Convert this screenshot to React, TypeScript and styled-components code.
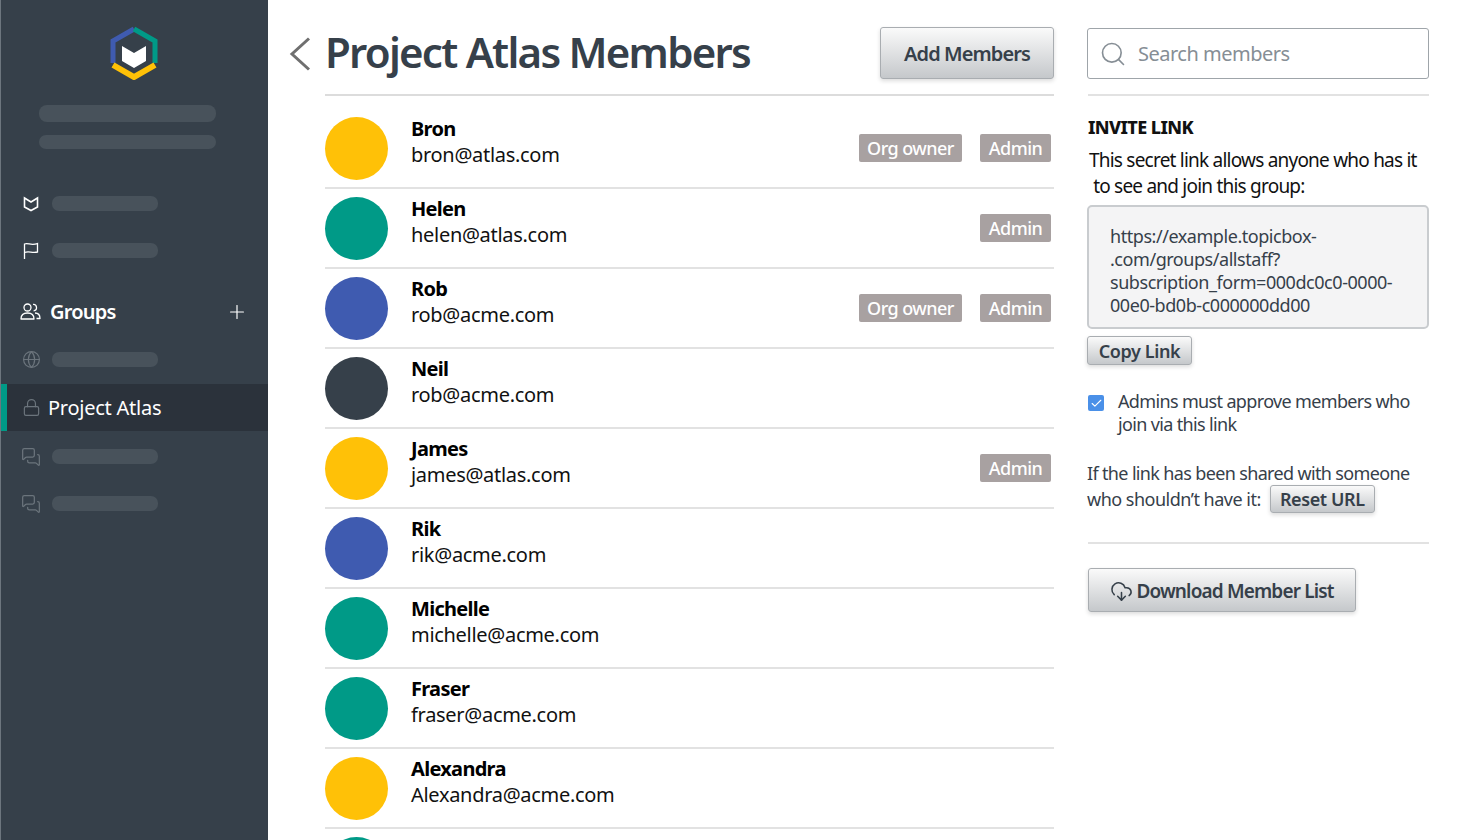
import React from "react";
import styled, { createGlobalStyle } from "styled-components";
import { Check, CloudDownload, Globe, Lock, MessagesSquare, Plus, Search } from "lucide-react";

const GlobalStyle = createGlobalStyle`
  html, body {
    margin: 0;
    height: 100%;
    overflow: hidden;
    background: #fff;
  }
  body {
    font-family: "Noto Sans", "Open Sans", sans-serif;
    color: #36404a;
  }
`;

const Page = styled.div`
  display: grid;
  grid-template-columns: 268px 1fr;
  height: 840px;
  overflow: hidden;
`;

const Sidebar = styled.nav`
  display: flex;
  flex-direction: column;
  background: #36404a;
  border-left: 1px solid #6d767e;
  box-sizing: border-box;
`;

const LogoWrap = styled.div`
  display: flex;
  justify-content: center;
  padding: 26px 2px 0 0;
  height: 79px;
`;

const OrgBlock = styled.div`
  display: flex;
  flex-direction: column;
  gap: 13px;
  padding: 0 52px 0 38px;
  margin-bottom: 31px;
`;

const Skeleton = styled.div<{ $h: number }>`
  height: ${p => p.$h}px;
  border-radius: 8px;
  background: #48525b;
`;

const NavRow = styled.div<{ $top?: number }>`
  display: flex;
  align-items: center;
  height: 47px;
  margin-top: ${p => p.$top ?? 0}px;
  padding-left: 20px;
  gap: 11px;
`;

const NavIcon = styled.span<{ $dim?: boolean }>`
  display: flex;
  width: 20px;
  justify-content: center;
  color: ${p => (p.$dim ? "#6b747c" : "#fff")};
`;

const NavBar = styled.div`
  width: 106px;
  height: 15px;
  border-radius: 7px;
  background: #48525b;
`;

const GroupsRow = styled.div`
  display: flex;
  align-items: center;
  height: 47px;
  padding: 0 20px 0 19px;
  margin-top: 14px;
  gap: 9px;
  color: #fff;
  font-size: 20px;
  font-weight: 600;
  letter-spacing: -0.8px;
`;

const GroupsLabel = styled.span`
  flex: 1;
`;

const ActiveRow = styled.div`
  display: flex;
  align-items: center;
  height: 47px;
  margin-top: 1px;
  background: #2b323b;
  border-left: 6px solid #009a87;
  padding-left: 14px;
  gap: 7px;
  color: #fff;
  font-size: 20px;
  letter-spacing: -0.25px;
`;

const Content = styled.main`
  display: flex;
  padding: 27px 32px 0 21px;
  gap: 33px;
  min-width: 0;
`;

const MembersColumn = styled.section`
  width: 765px;
  flex: none;
`;

const HeaderRow = styled.header`
  display: flex;
  align-items: flex-start;
  height: 67px;
`;

const BackIcon = styled.span`
  display: flex;
  width: 36px;
  padding-top: 10px;
`;

const Title = styled.h1`
  flex: 1;
  margin: -1px 0 0;
  font-size: 42px;
  font-weight: 600;
  line-height: 52px;
  letter-spacing: -1.75px;
  color: #36404a;
`;

const RaisedButton = styled.button<{ $size: "lg" | "sm" }>`
  display: inline-flex;
  align-items: center;
  justify-content: center;
  font-family: inherit;
  font-weight: 600;
  color: #36404a;
  background: linear-gradient(#fafafa, #c5c8cb);
  border: 1px solid #a9adb1;
  border-radius: 3px;
  box-shadow: 0 2px 4px rgba(0, 0, 0, 0.14);
  padding: 0;
  ${p =>
    p.$size === "lg"
      ? "font-size: 20px; letter-spacing: -0.9px;"
      : "font-size: 18px; letter-spacing: -0.4px;"}
`;

const AddButton = styled(RaisedButton)`
  width: 174px;
  height: 52px;
  padding-top: 1px;
`;

const List = styled.div`
  margin-left: 36px;
  border-top: 2px solid #dcdcdc;
  padding-top: 13px;
`;

const Row = styled.div`
  display: grid;
  grid-template-columns: 63px 1fr auto;
  column-gap: 23px;
  align-items: center;
  height: 80px;
  box-sizing: border-box;
  padding-top: 1px;
  border-bottom: 2px solid #e2e2e2;
`;

const Avatar = styled.div<{ $color: string }>`
  width: 63px;
  height: 63px;
  border-radius: 50%;
  background: ${p => p.$color};
`;

const Person = styled.div`
  padding-bottom: 13px;
  font-size: 20px;
  line-height: 26px;
  letter-spacing: -0.3px;
  color: #111;
`;

const PersonName = styled.div`
  font-weight: 700;
  letter-spacing: -0.7px;
  color: #000;
`;

const Badges = styled.div`
  display: flex;
  gap: 18px;
  padding: 0 3px 1px 0;
`;

const Badge = styled.span<{ $w: number }>`
  display: flex;
  align-items: center;
  justify-content: center;
  width: ${p => p.$w}px;
  height: 28px;
  border-radius: 2px;
  background: #a8a1a1;
  color: #fff;
  font-size: 18px;
  font-weight: 500;
  letter-spacing: -0.55px;
`;

const SideColumn = styled.aside`
  width: 342px;
  flex: none;
  font-size: 18px;
`;

const SearchBox = styled.div`
  display: flex;
  align-items: center;
  gap: 11px;
  box-sizing: border-box;
  height: 51px;
  margin-top: 1px;
  padding-left: 11px;
  border: 1px solid #9fa5aa;
  border-radius: 3px;
  color: #868e95;
  font-size: 20px;
  letter-spacing: -0.5px;
`;

const Rule = styled.hr`
  margin: 15px 0 0 1px;
  border: 0;
  border-top: 2px solid #e2e2e2;
`;

const SectionTitle = styled.h2`
  margin: 19px 0 0 1px;
  font-size: 18px;
  line-height: 24px;
  font-weight: 800;
  letter-spacing: -0.6px;
  color: #111;
`;

const Intro = styled.p`
  margin: 8px 0 0 2px;
  font-size: 19px;
  line-height: 26px;
  letter-spacing: -0.78px;
  color: #111;
  white-space: pre;
`;

const LinkBox = styled.div`
  box-sizing: border-box;
  height: 124px;
  margin-top: 6px;
  padding: 18px 21px 0;
  background: #f4f4f5;
  border: 2px solid #c9cccf;
  border-radius: 5px;
  font-size: 18px;
  line-height: 23px;
  letter-spacing: -0.45px;
  color: #36404a;
  white-space: pre;
`;

const CopyButton = styled(RaisedButton)`
  display: flex;
  width: 105px;
  height: 29px;
  margin-top: 7px;
`;

const CheckRow = styled.label`
  display: flex;
  gap: 14px;
  margin: 25px 0 0 1px;
  line-height: 23px;
  letter-spacing: -0.65px;
`;

const CheckBox = styled.span`
  display: flex;
  align-items: center;
  justify-content: center;
  flex: none;
  width: 16px;
  height: 16px;
  margin-top: 5px;
  border-radius: 2px;
  background: #4a90e8;
  color: #fff;
`;

const ResetText = styled.div`
  margin-top: 24px;
  line-height: 26px;
  letter-spacing: -0.65px;
`;

const ResetLine = styled.div`
  display: flex;
  align-items: center;
  gap: 9px;
  height: 26px;
  letter-spacing: -0.5px;
`;

const ResetButton = styled(RaisedButton)`
  flex: none;
  width: 105px;
  height: 28px;
`;

const LowerRule = styled(Rule)`
  margin-top: 30px;
`;

const DownloadButton = styled(RaisedButton)`
  gap: 3px;
  width: 268px;
  height: 44px;
  margin: 24px 0 0 1px;
  padding-top: 2px;
  font-size: 19px;
  letter-spacing: -0.85px;
`;

const BrandMark = () => (
  <svg width="48" height="54" viewBox="0 0 48 54">
    <path d="M24 3 L3 15 V37" fill="none" stroke="#3f5bb0" strokeWidth="5" />
    <path d="M24 3 L45 15 V37" fill="none" stroke="#009a87" strokeWidth="5" />
    <path d="M3 39 L24 51 L45 39" fill="none" stroke="#ffc107" strokeWidth="6" />
    <path d="M12 20 L24 27 L36 20 V35 L24 42 L12 35 Z" fill="#fff" />
  </svg>
);

const MailShield = () => (
  <svg width="16" height="16" viewBox="0 0 16 16" fill="none" stroke="#fff" strokeWidth="1.6">
    <path d="M1.5 2 L8 6 L14.5 2 V11 L8 14.5 L1.5 11 Z" />
  </svg>
);

const Flag = () => (
  <svg width="16" height="18" viewBox="0 0 16 18" fill="none" stroke="#fff" strokeWidth="1.3">
    <path d="M1.5 17 V2 C5 0.5 8 4 14.5 1.5 V10 C9 11.5 6 8.5 1.5 10.5" />
  </svg>
);

const People = () => (
  <svg width="21" height="17" viewBox="0 0 21 17" fill="none" stroke="#fff" strokeWidth="1.3" strokeLinejoin="round">
    <circle cx="7.5" cy="4.5" r="3.5" />
    <path d="M1 16 C1 11.5 4 10 7.5 10 S14 11.5 14 16 Z" />
    <path d="M13 1.4 A3.2 3.2 0 1 1 13.6 7.8" />
    <path d="M15 10 C18 10 20 11.5 20 15.5 H16.5" />
  </svg>
);

const BackChevron = () => (
  <svg width="22" height="34" viewBox="0 0 22 34" fill="none" stroke="#6f6f6f" strokeWidth="3">
    <path d="M20 1.5 L3 17 L20 32.5" />
  </svg>
);

const YELLOW = "#ffc107";
const TEAL = "#009a87";
const BLUE = "#3f5bb0";
const DARK = "#36404a";

const members = [
  { name: "Bron", email: "bron@atlas.com", color: YELLOW, owner: true, admin: true },
  { name: "Helen", email: "helen@atlas.com", color: TEAL, admin: true },
  { name: "Rob", email: "rob@acme.com", color: BLUE, owner: true, admin: true },
  { name: "Neil", email: "rob@acme.com", color: DARK },
  { name: "James", email: "james@atlas.com", color: YELLOW, admin: true },
  { name: "Rik", email: "rik@acme.com", color: BLUE },
  { name: "Michelle", email: "michelle@acme.com", color: TEAL },
  { name: "Fraser", email: "fraser@acme.com", color: TEAL },
  { name: "Alexandra", email: "Alexandra@acme.com", color: YELLOW },
  { name: "", email: "", color: TEAL },
];

export default function App() {
  return (
    <Page>
      <GlobalStyle />
      <Sidebar>
        <LogoWrap>
          <BrandMark />
        </LogoWrap>
        <OrgBlock>
          <Skeleton $h={17} />
          <Skeleton $h={14} />
        </OrgBlock>
        <NavRow>
          <NavIcon><MailShield /></NavIcon>
          <NavBar />
        </NavRow>
        <NavRow>
          <NavIcon><Flag /></NavIcon>
          <NavBar />
        </NavRow>
        <GroupsRow>
          <People />
          <GroupsLabel>Groups</GroupsLabel>
          <Plus size={22} strokeWidth={1.3} />
        </GroupsRow>
        <NavRow $top={1}>
          <NavIcon $dim><Globe size={19} strokeWidth={1.5} /></NavIcon>
          <NavBar />
        </NavRow>
        <ActiveRow>
          <NavIcon $dim><Lock size={19} strokeWidth={1.5} /></NavIcon>
          Project Atlas
        </ActiveRow>
        <NavRow $top={2}>
          <NavIcon $dim><MessagesSquare size={20} strokeWidth={1.5} /></NavIcon>
          <NavBar />
        </NavRow>
        <NavRow>
          <NavIcon $dim><MessagesSquare size={20} strokeWidth={1.5} /></NavIcon>
          <NavBar />
        </NavRow>
      </Sidebar>
      <Content>
        <MembersColumn>
          <HeaderRow>
            <BackIcon><BackChevron /></BackIcon>
            <Title>Project Atlas Members</Title>
            <AddButton $size="lg">Add Members</AddButton>
          </HeaderRow>
          <List>
            {members.map((m, i) => (
              <Row key={i}>
                <Avatar $color={m.color} />
                <Person>
                  <PersonName>{m.name}</PersonName>
                  {m.email}
                </Person>
                <Badges>
                  {m.owner && <Badge $w={103}>Org owner</Badge>}
                  {m.admin && <Badge $w={71}>Admin</Badge>}
                </Badges>
              </Row>
            ))}
          </List>
        </MembersColumn>
        <SideColumn>
          <SearchBox>
            <Search size={28} strokeWidth={1.4} />
            Search members
          </SearchBox>
          <Rule />
          <SectionTitle>INVITE LINK</SectionTitle>
          <Intro>{"This secret link allows anyone who has it\n to see and join this group:"}</Intro>
          <LinkBox>{"https://example.topicbox-\n.com/groups/allstaff?\nsubscription_form=000dc0c0-0000-\n00e0-bd0b-c000000dd00"}</LinkBox>
          <CopyButton $size="sm">Copy Link</CopyButton>
          <CheckRow>
            <CheckBox><Check size={13} strokeWidth={2} /></CheckBox>
            <span>Admins must approve members who join via this link</span>
          </CheckRow>
          <ResetText>
            If the link has been shared with someone
            <ResetLine>
              <span>who shouldn’t have it:</span>
              <ResetButton $size="sm">Reset URL</ResetButton>
            </ResetLine>
          </ResetText>
          <LowerRule />
          <DownloadButton $size="lg">
            <CloudDownload size={23} strokeWidth={1.6} />
            Download Member List
          </DownloadButton>
        </SideColumn>
      </Content>
    </Page>
  );
}
